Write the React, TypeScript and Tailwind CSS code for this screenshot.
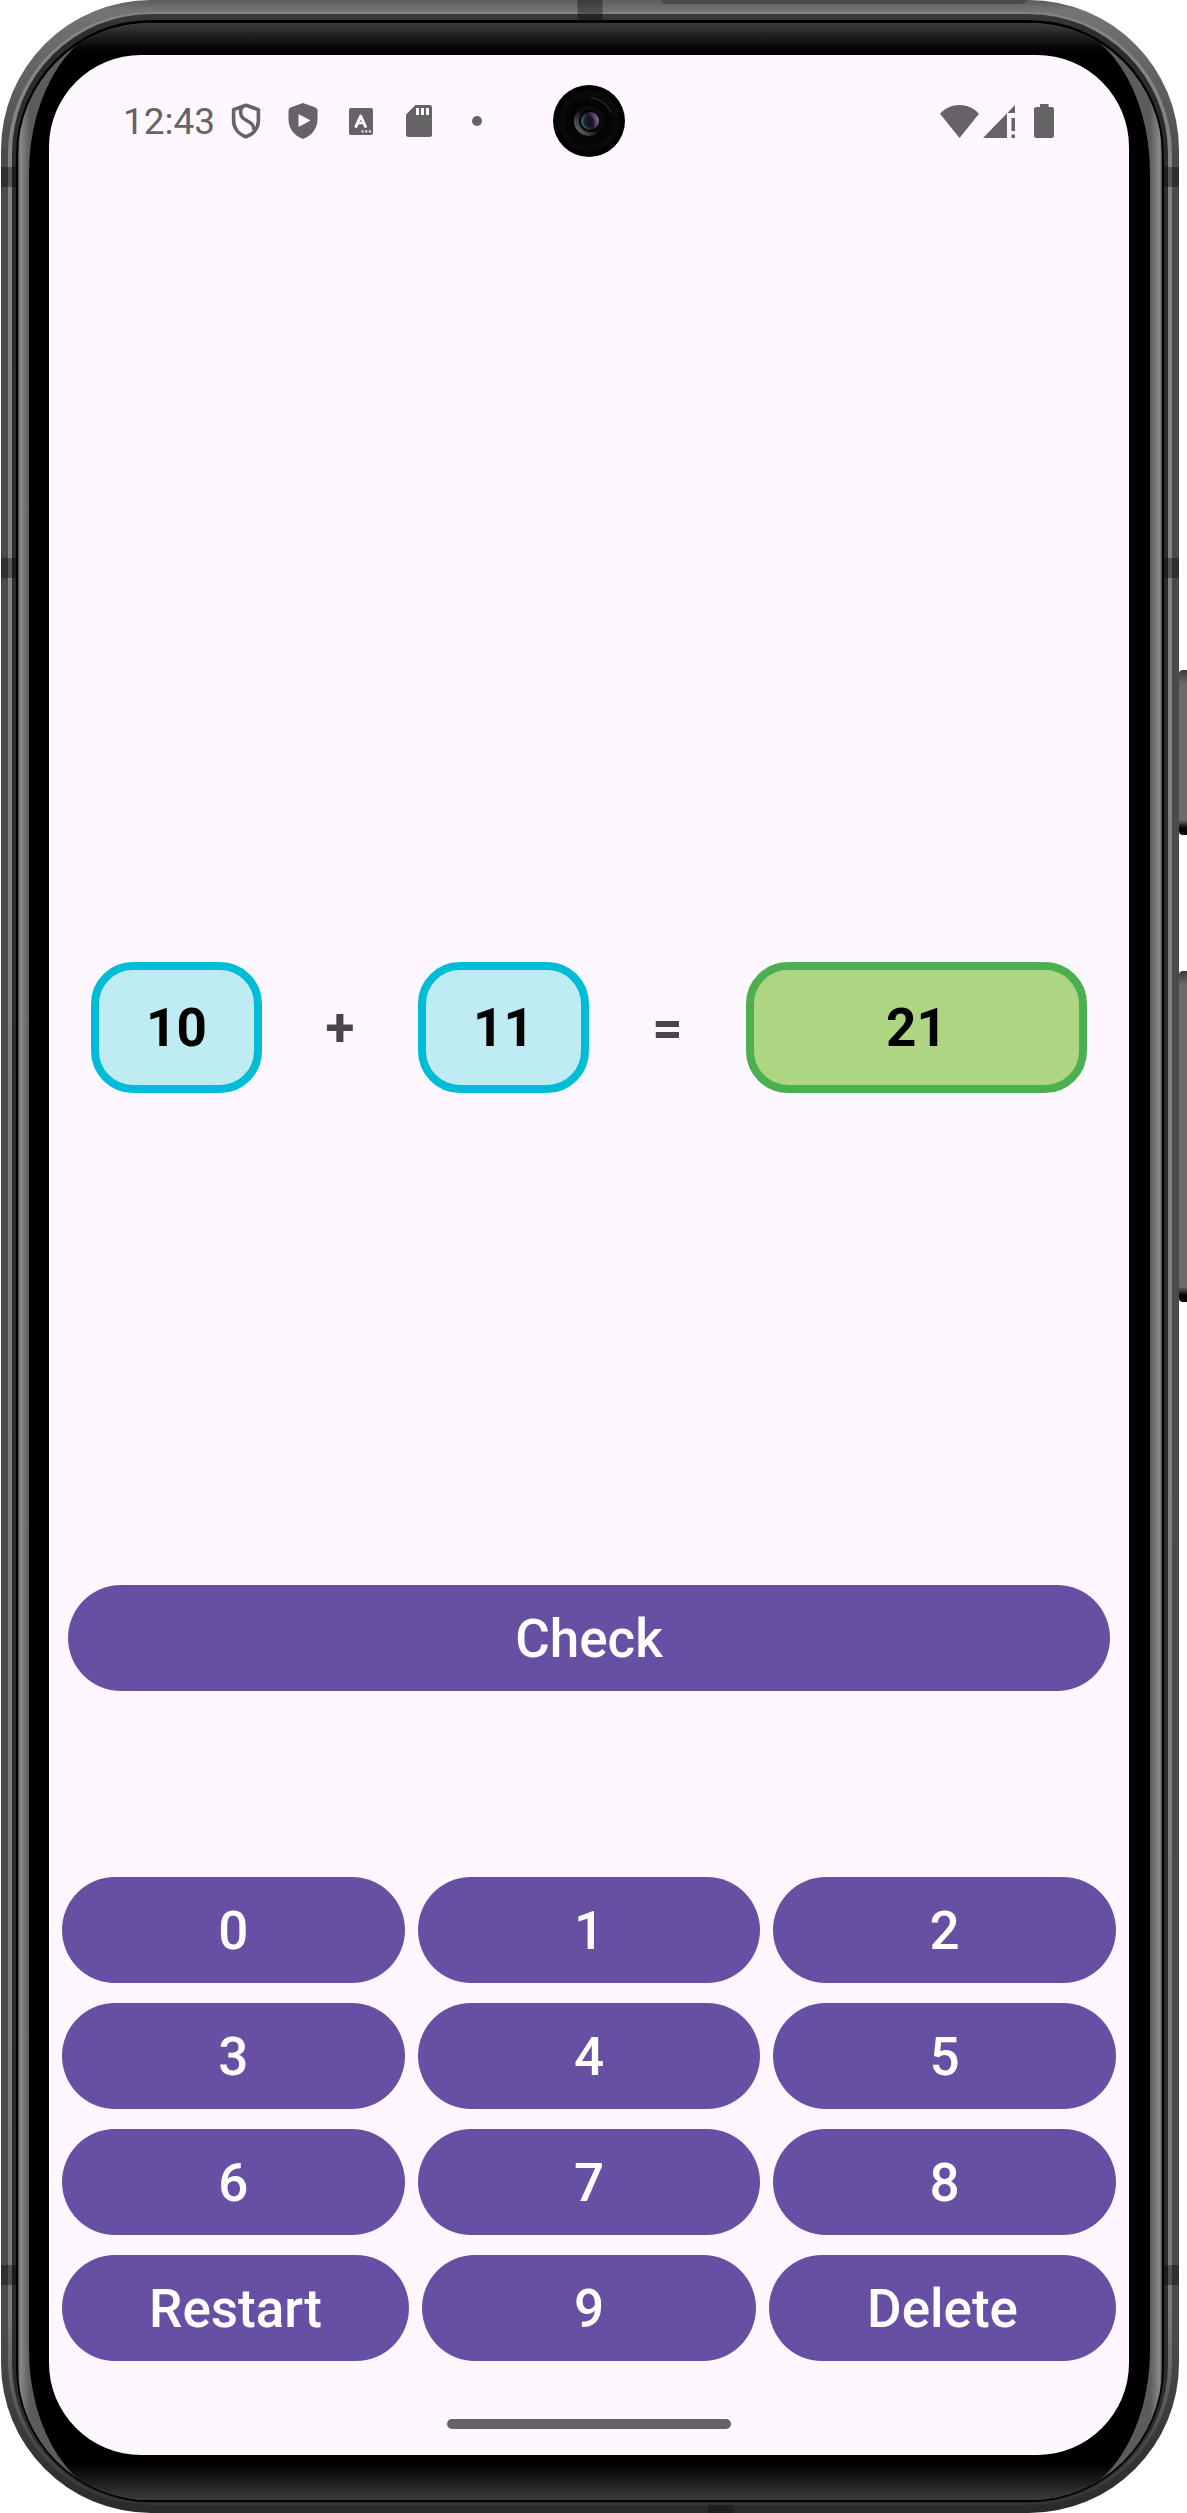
import { useState, type ReactNode } from "react";

const FIRST = 10;
const SECOND = 11;

function ShieldOutlineIcon() {
  return (
    <svg width="30" height="36" viewBox="0 0 30 36" fill="none" stroke="currentColor" aria-hidden="true">
      <path d="M15 2.2 L27.4 6.6 V17.5 C27.4 25 22.5 31.2 15 33.8 C7.5 31.2 2.6 25 2.6 17.5 V6.6 Z" strokeWidth="3.6" strokeLinejoin="round" />
      <path d="M12 3.5 C8.5 6 9 12.5 12.5 15.5 C16 18.5 24 20 22.5 27" strokeWidth="3.4" />
    </svg>
  );
}

function ShieldPlayIcon() {
  return (
    <svg width="30" height="36" viewBox="0 0 30 36" fill="currentColor" aria-hidden="true">
      <path
        fillRule="evenodd"
        d="M15 0 L27.5 4.6 Q29.5 5.6 29.5 7.6 V16 C29.5 25.5 24 32.5 15 36 C6 32.5 .5 25.5 .5 16 V7.6 Q.5 5.6 2.5 4.6 Z M10.5 11 V24 L22.5 17.5 Z"
      />
    </svg>
  );
}

function LetterBoxIcon() {
  return (
    <svg width="24" height="27" viewBox="0 0 24 27" aria-hidden="true">
      <rect width="24" height="27" rx="2" fill="currentColor" />
      <g fill="none" stroke="#fef7ff" strokeWidth="3" strokeLinecap="round" strokeLinejoin="round">
        <path d="M7 18.5 L11.7 8 L16.4 18.5" />
        <path d="M9 15 H14.5" strokeWidth="2.4" />
      </g>
      <g fill="#fef7ff">
        <rect x="12.5" y="22.4" width="2" height="2" />
        <rect x="16.2" y="22.4" width="2" height="2" />
        <rect x="19.9" y="22.4" width="2" height="2" />
      </g>
    </svg>
  );
}

function SdCardIcon() {
  return (
    <svg width="26" height="32" viewBox="0 0 26 32" aria-hidden="true">
      <path d="M9.5 0 H23.5 Q26 0 26 2.5 V29.5 Q26 32 23.5 32 H2.5 Q0 32 0 29.5 V9.5 Z" fill="currentColor" />
      <g fill="#fef7ff">
        <rect x="10" y="3" width="3" height="7" />
        <rect x="15" y="3" width="3" height="7" />
        <rect x="20" y="3" width="3" height="7" />
      </g>
    </svg>
  );
}

function WifiIcon() {
  return (
    <svg width="39" height="33" viewBox="0 0 39 33" fill="currentColor" aria-hidden="true">
      <path d="M19.5 33 L0 8.8 C5 3 12 0 19.5 0 C27 0 34 3 39 8.8 Z" />
    </svg>
  );
}

function SignalIcon() {
  return (
    <svg width="32" height="33" viewBox="0 0 32 33" fill="currentColor" aria-hidden="true">
      <path d="M32 0 V8 H24 V33 H0 Z" />
      <rect x="28.5" y="13" width="3.5" height="13" />
      <rect x="28.5" y="29.5" width="3.5" height="3.5" />
    </svg>
  );
}

function BatteryIcon() {
  return (
    <svg width="20" height="34" viewBox="0 0 20 34" fill="currentColor" aria-hidden="true">
      <path d="M6 0 H14.5 V3 H17.5 Q20 3 20 5.5 V31.5 Q20 34 17.5 34 H2.5 Q0 34 0 31.5 V5.5 Q0 3 2.5 3 H6 Z" />
    </svg>
  );
}

function Camera() {
  return (
    <svg className="absolute left-1/2 top-1/2 -translate-x-1/2 -translate-y-1/2" width="72" height="72" viewBox="0 0 72 72" aria-hidden="true">
      <defs>
        <linearGradient id="lens" x1="0" y1="0.6" x2="1" y2="0.3">
          <stop offset="0" stopColor="#2b6a80" />
          <stop offset="0.5" stopColor="#15152a" />
          <stop offset="1" stopColor="#a36ab0" />
        </linearGradient>
        <linearGradient id="rim" x1="0.1" y1="0.9" x2="0.8" y2="0.3">
          <stop offset="0" stopColor="#6a6a6a" />
          <stop offset="0.6" stopColor="#0c0c0c" />
        </linearGradient>
      </defs>
      <circle cx="36" cy="36" r="36" fill="#000" />
      <circle cx="36" cy="36" r="31" fill="#090909" />
      <circle cx="36" cy="36" r="23.5" fill="#040404" />
      <path d="M38 13 A23.5 23.5 0 0 1 58 28" fill="none" stroke="#262626" strokeWidth="1.5" />
      <circle cx="36" cy="36" r="15" fill="url(#rim)" />
      <circle cx="37" cy="36" r="11" fill="#050505" />
      <circle cx="37" cy="36" r="9" fill="url(#lens)" />
      <circle cx="36" cy="37" r="5.5" fill="#11111f" opacity="0.7" />
    </svg>
  );
}

function StatusBar() {
  return (
    <header className="relative flex h-[132px] shrink-0 items-center justify-between pl-[74px] pr-[75px] text-[#656366]">
      <div className="flex items-center">
        <span className="w-[108px] text-[37px] leading-none">12:43</span>
        <ShieldOutlineIcon />
        <span className="ml-[27px] flex"><ShieldPlayIcon /></span>
        <span className="ml-[31px] flex"><LetterBoxIcon /></span>
        <span className="ml-[33px] flex"><SdCardIcon /></span>
        <span className="ml-10 size-[10px] rounded-full bg-current" />
      </div>
      <Camera />
      <div className="flex items-center">
        <WifiIcon />
        <span className="ml-1 flex"><SignalIcon /></span>
        <span className="ml-[19px] flex"><BatteryIcon /></span>
      </div>
    </header>
  );
}

function PillButton({ children, onClick }: { children: ReactNode; onClick?: () => void }) {
  return (
    <button
      type="button"
      onClick={onClick}
      className="flex h-[106px] w-full cursor-pointer items-center justify-center rounded-full bg-[#6750a3] pt-0.5 text-[53px] font-medium leading-none text-white"
    >
      {children}
    </button>
  );
}

function NumberBox({ children, green = false }: { children: ReactNode; green?: boolean }) {
  return (
    <output
      className={
        "flex h-[131px] items-center justify-center rounded-[42px] border-8 pt-0.5 text-[53px] font-bold leading-none text-black " +
        (green ? "border-[#4caf50] bg-[#aed581]" : "border-[#00bcd7] bg-[#bfebf3]")
      }
    >
      {children}
    </output>
  );
}

function Game() {
  const [answer, setAnswer] = useState("21");
  const press = (digit: number) => setAnswer((value) => (value + digit).slice(0, 4));

  return (
    <main className="flex grow flex-col">
      <div className="grow-[775]" />
      <div className="mx-[42px] grid grid-cols-[171fr_156fr_171fr_157fr_341fr] items-center text-center text-[53px] font-bold leading-none text-[#49454f]">
        <NumberBox>{FIRST}</NumberBox>
        <span className="pt-0.5">+</span>
        <NumberBox>{SECOND}</NumberBox>
        <span className="pt-0.5">=</span>
        <NumberBox green>{answer}</NumberBox>
      </div>
      <div className="grow-[492]" />
      <div className="mx-[19px]">
        <PillButton>Check</PillButton>
      </div>
      <div className="mx-[13px] mt-[186px] flex flex-col gap-5">
        <div className="grid grid-cols-3 gap-x-[13px] gap-y-5">
          {[0, 1, 2, 3, 4, 5, 6, 7, 8].map((digit) => (
            <PillButton key={digit} onClick={() => press(digit)}>{digit}</PillButton>
          ))}
        </div>
        <div className="grid grid-cols-[347fr_334fr_347fr] gap-x-[13px]">
          <PillButton onClick={() => setAnswer("")}>Restart</PillButton>
          <PillButton onClick={() => press(9)}>9</PillButton>
          <PillButton onClick={() => setAnswer((value) => value.slice(0, -1))}>Delete</PillButton>
        </div>
      </div>
    </main>
  );
}

function AntennaBands() {
  return (
    <>
      <span className="absolute left-0 top-[167px] h-5 w-[15px] bg-black/35" />
      <span className="absolute right-0 top-[167px] h-5 w-[15px] bg-black/35" />
      <span className="absolute left-0 top-[558px] h-5 w-[15px] bg-black/35" />
      <span className="absolute right-0 top-[558px] h-5 w-[15px] bg-black/35" />
      <span className="absolute bottom-[228px] left-0 h-5 w-[15px] bg-black/35" />
      <span className="absolute bottom-[228px] right-0 h-5 w-[15px] bg-black/35" />
      <span className="absolute left-1/2 top-0 h-[21px] w-[25px] -translate-x-1/2 bg-black/35" />
      <span className="absolute right-[13%] top-0 h-1 w-[31%] rounded-b-full bg-[#4c4c4c]" />
      <span className="absolute bottom-0 left-[60%] h-2 w-[25px] bg-black/25" />
    </>
  );
}

export default function App() {
  return (
    <div className="relative flex min-h-screen bg-white pl-px pr-2 font-[Roboto,sans-serif]">
      <span className="absolute right-0 top-[670px] h-[165px] w-2 rounded-l-sm bg-[linear-gradient(to_bottom,#3a3a3a,#6b6b6b_14px,#6b6b6b_150px,#050505_158px)]" />
      <span className="absolute right-0 top-[971px] h-[331px] w-2 rounded-l-sm bg-[linear-gradient(to_bottom,#3a3a3a,#6b6b6b_14px,#6b6b6b_316px,#050505_324px)]" />

      {/* Metal rail */}
      <div className="relative flex grow overflow-hidden rounded-[150px] bg-[linear-gradient(to_bottom,#5c5c5c,#747474_10px,#4a4a4a_160px,#4a4a4a_2340px,#2a2a2a)] px-[7px] pb-2 pt-[12px]">
        <div className="flex grow rounded-[142px] bg-[linear-gradient(to_bottom,#858585,#7c7c7c_2300px,#333333)] px-1 py-[2px]">
          <div className="flex grow rounded-[139px] bg-[linear-gradient(to_bottom,#3a3a3a,#2c2c2c_20px)] px-1 pb-px pt-[6px]">
            <div className="flex grow rounded-[135px] bg-black px-[2px] pb-[2px] pt-[3px]">
              {/* Glass edge with the bezel over it */}
              <div className="flex grow overflow-hidden rounded-[132px] bg-[linear-gradient(to_right,#3c3c3c,#8a8a8a_2px,#5c5c5c_12px,#5c5c5c_calc(100%-12px),#8a8a8a_calc(100%-2px),#3c3c3c)] pl-[11px] pr-[12px]">
                <div className="flex grow rounded-[100px/150px] bg-[linear-gradient(to_bottom,#3c3c3c,#000_28px,#000_calc(100%-36px),#3c3c3c)] pb-[45px] pl-5 pr-[21px] pt-[32px]">
                  <div className="flex grow flex-col rounded-[92px] bg-[#fef7ff]">
                    <StatusBar />
                    <Game />
                    <div className="mb-[26px] mt-[58px] h-[10px] w-[284px] self-center rounded-full bg-[#656366]" />
                  </div>
                </div>
              </div>
            </div>
          </div>
        </div>
        <AntennaBands />
      </div>
    </div>
  );
}
